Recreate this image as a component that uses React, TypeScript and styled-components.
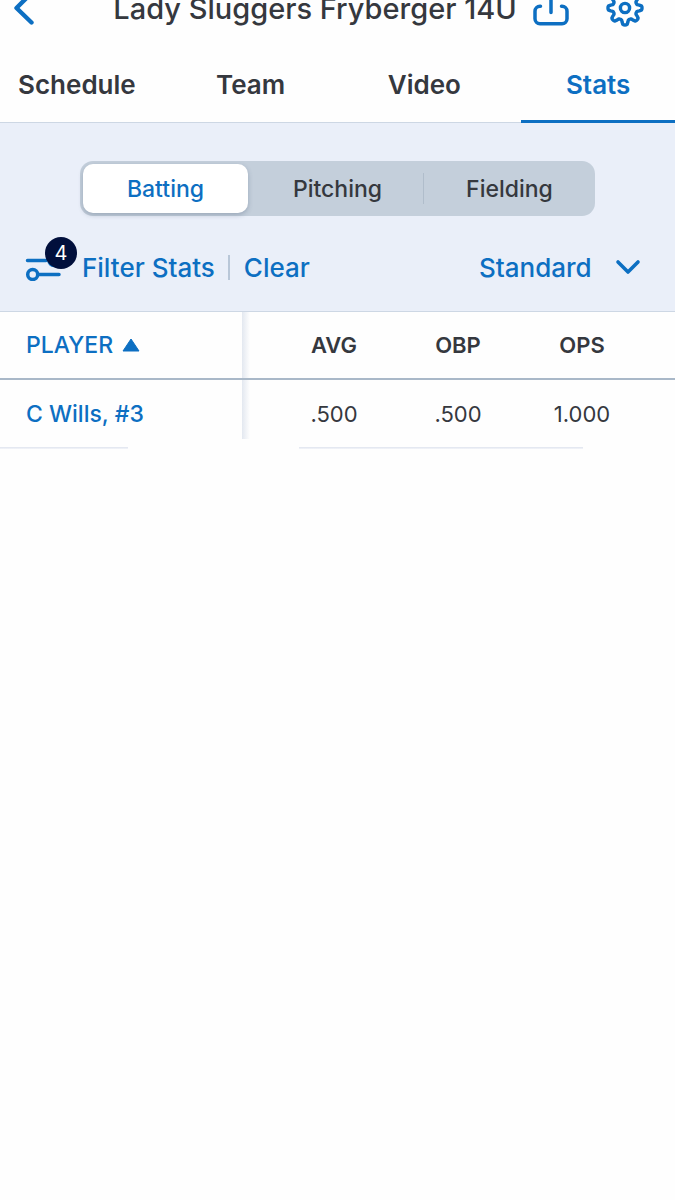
import { useState } from "react";
import styled, { createGlobalStyle } from "styled-components";

const colors = {
  blue: "#0d6fc2",
  navy: "#010f3c",
  text: "#35383e",
  panel: "#eaeff9",
  line: "#cdd7e4",
  track: "#c4cfdb",
};

const tabs = ["Schedule", "Team", "Video", "Stats"];
const categories = ["Batting", "Pitching", "Fielding"];
const columns = ["AVG", "OBP", "OPS"];
const players = [{ name: "C Wills, #3", stats: [".500", ".500", "1.000"] }];

const App = () => {
  const [tab, setTab] = useState("Stats");
  const [category, setCategory] = useState("Batting");

  return (
    <Page>
      <GlobalStyle />
      <AppBar>
        <IconButton aria-label="Back">
          <svg width="22" height="36" viewBox="0 0 22 36" fill="none">
            <path
              d="M18.500 3 3.500 18l15 14.500"
              stroke="currentColor"
              strokeWidth="4.400"
              strokeLinecap="round"
              strokeLinejoin="round"
            />
          </svg>
        </IconButton>
        <Title>Lady Sluggers Fryberger 14U</Title>
        <Actions>
          <IconButton aria-label="Share">
            <svg width="36" height="44" viewBox="0 0 36 44" fill="none">
              <path
                d="M7.500 20.300H7a5 5 0 0 0-5 5V32.700a5 5 0 0 0 5 5h22a5 5 0 0 0 5-5V25.300a5 5 0 0 0-5-5h-.500M18 26.500V6M11 12l7-7 7 7"
                stroke="currentColor"
                strokeWidth="3.500"
                strokeLinecap="round"
                strokeLinejoin="round"
              />
            </svg>
          </IconButton>
          <IconButton aria-label="Settings">
            <GearIcon />
          </IconButton>
        </Actions>
      </AppBar>

      <Tabs>
        {tabs.map((name) => (
          <Tab key={name} $active={name === tab} onClick={() => setTab(name)}>
            {name}
          </Tab>
        ))}
      </Tabs>

      <Panel>
        <Segments>
          {categories.map((name) => (
            <Segment
              key={name}
              $active={name === category}
              onClick={() => setCategory(name)}
            >
              {name}
            </Segment>
          ))}
        </Segments>

        <Filters>
          <FilterButton>
            <FilterIcon>
              <svg width="38" height="28" viewBox="0 0 38 28" fill="none">
                <g
                  stroke="currentColor"
                  strokeWidth="3.500"
                  strokeLinecap="round"
                >
                  <path d="M3.500 7.500H22M14.500 21.500H35" />
                  <circle cx="8.700" cy="21.500" r="5" />
                  <circle cx="30" cy="7.500" r="5" />
                </g>
              </svg>
              <Badge>4</Badge>
            </FilterIcon>
            Filter Stats
          </FilterButton>
          <Separator />
          <TextButton>Clear</TextButton>
          <SelectBox>
            <Select aria-label="Stat view" defaultValue="Standard">
              <option>Standard</option>
            </Select>
            <svg width="26" height="16" viewBox="0 0 26 16" fill="none">
              <path
                d="m3 3 10 10L23 3"
                stroke="currentColor"
                strokeWidth="3.600"
                strokeLinecap="round"
                strokeLinejoin="round"
              />
            </svg>
          </SelectBox>
        </Filters>
      </Panel>

      <Table>
        <thead>
          <tr>
            <PlayerCell as="th" scope="col" aria-sort="ascending">
              <SortButton>
                PLAYER
                <svg width="18" height="14" viewBox="0 0 18 14">
                  <path
                    d="M9 1 17 13H1z"
                    fill="currentColor"
                    stroke="currentColor"
                    strokeLinejoin="round"
                  />
                </svg>
              </SortButton>
            </PlayerCell>
            {columns.map((name) => (
              <HeadCell key={name} scope="col">
                {name}
              </HeadCell>
            ))}
          </tr>
        </thead>
        <tbody>
          {players.map((player) => (
            <tr key={player.name}>
              <PlayerCell $last>
                <PlayerLink href="#player">{player.name}</PlayerLink>
              </PlayerCell>
              {player.stats.map((value, index) => (
                <StatCell key={index}>{value}</StatCell>
              ))}
            </tr>
          ))}
        </tbody>
      </Table>
      <EndRule>
        <span />
        <span />
      </EndRule>
    </Page>
  );
};

// eight rounded teeth around a small hub
const GearIcon = () => {
  const points = Array.from({ length: 96 }, (_, i) => {
    const angle = (i / 96) * Math.PI * 2;
    const wave = Math.cos(angle * 8);
    const radius = 14.6 + 2.5 * Math.tanh(wave * 2);
    const x = 20 + radius * Math.sin(angle);
    const y = 20 + radius * Math.cos(angle);
    return `${x.toFixed(2)} ${y.toFixed(2)}`;
  });

  return (
    <svg width="40" height="40" viewBox="0 0 40 40" fill="none">
      <g stroke="currentColor" strokeWidth="3.400" strokeLinejoin="round">
        <path d={`M${points.join("L")}Z`} />
        <circle cx="20" cy="20" r="4.600" />
      </g>
    </svg>
  );
};

const GlobalStyle = createGlobalStyle`
  * {
    box-sizing: border-box;
  }
  body {
    margin: 0;
    background: #fefefe;
    color: ${colors.text};
    font-family: Inter, "Liberation Sans", sans-serif;
  }
  button, select {
    margin: 0;
    padding: 0;
    border: 0;
    background: none;
    color: inherit;
    font: inherit;
    cursor: pointer;
  }
  svg {
    display: block;
  }
`;

const Page = styled.main`
  overflow: hidden;
`;

const AppBar = styled.header`
  display: flex;
  align-items: center;
  justify-content: space-between;
  height: 64px;
  margin-top: -24px;
  padding: 0 30px 0 13px;
`;

const IconButton = styled.button`
  color: ${colors.blue};
`;

const Title = styled.h1`
  flex: 1;
  margin: 0;
  padding-left: 78px;
  text-align: center;
  white-space: nowrap;
  font-size: 29px;
  font-weight: 500;
`;

const Actions = styled.div`
  display: flex;
  align-items: center;
  gap: 36px;
  padding-left: 16px;
`;

const Tabs = styled.nav`
  display: grid;
  grid-template-columns: repeat(4, 1fr);
  column-gap: 20px;
  height: 83px;
  border-bottom: 1px solid ${colors.line};
`;

const Tab = styled.button<{ $active: boolean }>`
  margin-bottom: -1px;
  padding-top: 8px;
  border-bottom: 3px solid
    ${({ $active }) => ($active ? colors.blue : "transparent")};
  color: ${({ $active }) => ($active ? colors.blue : colors.text)};
  font-size: 26px;
  font-weight: 600;
`;

const Panel = styled.section`
  padding: 38px 0 17px;
  border-bottom: 1px solid ${colors.line};
  background: ${colors.panel};
`;

const Segments = styled.div`
  display: grid;
  grid-template-columns: repeat(3, 1fr);
  gap: 7px;
  height: 55px;
  margin: 0 80px;
  padding: 3px;
  border-radius: 13px;
  background: ${colors.track};
`;

const Segment = styled.button<{ $active: boolean }>`
  position: relative;
  border-radius: 10px;
  background: ${({ $active }) => ($active ? "#fff" : "none")};
  box-shadow: ${({ $active }) =>
    $active ? "0 2px 5px rgba(60, 80, 110, 0.3)" : "none"};
  color: ${({ $active }) => ($active ? colors.blue : colors.text)};
  font-size: 23px;
  font-weight: 500;

  &:last-child::before {
    content: "";
    position: absolute;
    top: 9px;
    bottom: 9px;
    left: -4px;
    width: 1px;
    background: #b0bdcb;
  }
`;

const Filters = styled.div`
  display: flex;
  align-items: center;
  height: 78px;
  padding: 24px 34px 0 24px;
  color: ${colors.blue};
  font-size: 26px;
  font-weight: 500;
`;

const FilterButton = styled.button`
  display: flex;
  align-items: center;
  gap: 20px;
`;

const FilterIcon = styled.span`
  position: relative;
`;

const Badge = styled.span`
  position: absolute;
  top: -16px;
  left: 21px;
  width: 32px;
  height: 32px;
  border-radius: 50%;
  background: ${colors.navy};
  color: #fff;
  font-size: 20px;
  font-weight: 400;
  line-height: 32px;
  text-align: center;
`;

const Separator = styled.span`
  width: 2px;
  height: 25px;
  margin: 0 14px 0 13px;
  background: #b9c7d8;
`;

const TextButton = styled.button`
  color: ${colors.blue};
`;

const SelectBox = styled.label`
  position: relative;
  margin-left: auto;

  svg {
    position: absolute;
    top: 50%;
    right: 0;
    margin-top: -8px;
    pointer-events: none;
  }
`;

const Select = styled.select`
  appearance: none;
  padding-right: 49px;
`;

const Table = styled.table`
  width: 100%;
  border-collapse: collapse;
  table-layout: fixed;
  font-size: 22px;

  tr {
    height: 68px;
  }
  thead tr {
    height: 67px;
    border-bottom: 2px solid #a9b8c8;
  }
  th,
  td {
    padding: 0;
  }
  th:nth-child(2),
  td:nth-child(2) {
    padding-left: 22px;
  }
  th:last-child,
  td:last-child {
    padding-right: 31px;
  }
  th:nth-child(2) {
    width: 146px;
  }
  th:nth-child(3) {
    width: 124px;
  }
  th:last-child {
    width: 155px;
  }
`;

const PlayerCell = styled.td<{ $last?: boolean }>`
  && {
    padding-left: 26px;
  }
  text-align: left;
  color: ${colors.blue};
  background: linear-gradient(to right, #e3e8f0, rgba(240, 243, 248, 0)) right
    top / 8px ${({ $last }) => ($last ? "59px" : "100%")} no-repeat;
`;

const SortButton = styled.button`
  display: flex;
  align-items: center;
  gap: 9px;
  font-size: 23px;
  font-weight: 500;
`;

const PlayerLink = styled.a`
  color: inherit;
  font-size: 23px;
  font-weight: 500;
  text-decoration: none;
`;

const HeadCell = styled.th`
  font-weight: 600;
`;

const StatCell = styled.td`
  text-align: center;
`;

const EndRule = styled.div`
  display: grid;
  grid-template-columns: 19% 42%;
  column-gap: 171px;

  span {
    height: 2px;
    background: linear-gradient(#dfe4ee, #f3f5f9);
  }
`;

export default App;
